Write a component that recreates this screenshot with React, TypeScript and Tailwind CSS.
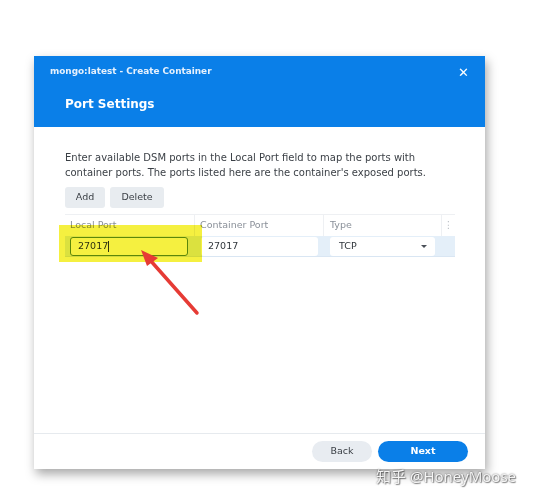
export default function App() {
  return (
    <div className="relative w-[536px] h-[499px] bg-white overflow-hidden pt-[56px] pl-[34px] font-['DejaVu_Sans',sans-serif]">
      <div className="w-[451px] h-[413px] bg-white flex flex-col shadow-[2px_5px_10px_rgba(0,0,0,0.35)]">
        {/* header */}
        <div className="h-[71px] bg-[#0a7fe8] text-white flex flex-col">
          <div className="flex items-center justify-between h-[30px] pl-[16px] pr-[16px] pt-[2px]">
            <span className="text-[8.9px] font-bold text-[#e6f1fd]">mongo:latest - Create Container</span>
            <span className="text-[13px] font-bold leading-none">✕</span>
          </div>
          <div className="pl-[31px] pt-[9px] text-[12px] font-bold">Port Settings</div>
        </div>

        {/* body */}
        <div className="flex-1 px-[31px] pt-[23px]">
          <p className="w-[368px] text-[10px] leading-[15px] text-[#3a3f45]">
            Enter available DSM ports in the Local Port field to map the ports with container ports. The ports listed here are the container's exposed ports.
          </p>
          <div className="flex gap-[5px] mt-[7px]">
            <button className="h-[21px] w-[40px] rounded-[3px] bg-[#e8ecf0] text-[9.5px] text-[#3a3f45]">Add</button>
            <button className="h-[21px] w-[54px] rounded-[3px] bg-[#e8ecf0] text-[9.5px] text-[#3a3f45]">Delete</button>
          </div>

          <div className="mt-[6px] w-[390px] border-t border-[#eef0f3]">
            <div className="flex h-[21px] items-center text-[9.5px] text-[#8a9099]">
              <div className="w-[130px] h-full flex items-center pl-[5px] border-r border-[#eef0f3]">Local Port</div>
              <div className="w-[129px] h-full flex items-center pl-[5px] border-r border-[#eef0f3]">Container Port</div>
              <div className="w-[118px] h-full flex items-center pl-[6px] border-r border-[#eef0f3]">Type</div>
              <div className="flex-1 flex items-center justify-center text-[#b5bac0]">⋮</div>
            </div>
            <div className="flex h-[21px] items-center bg-[#e4eff9] border-b border-[#d9e6f3]">
              <div className="w-[130px] pl-[5px]">
                <div className="h-[19px] w-[118px] rounded-[3px] border border-[#5f8f22] bg-white flex items-center pl-[7px] text-[9.5px] text-[#30363c]">
                  27017<span className="w-px h-[11px] bg-[#30363c]" />
                </div>
              </div>
              <div className="w-[129px] pl-[6px]">
                <div className="h-[19px] w-[117px] rounded-[3px] bg-white flex items-center pl-[7px] text-[9.5px] text-[#30363c]">27017</div>
              </div>
              <div className="w-[118px] pl-[6px]">
                <div className="h-[19px] w-[105px] rounded-[3px] bg-white flex items-center justify-between pl-[9px] pr-[8px] text-[9.5px] text-[#30363c]">
                  <span>TCP</span>
                  <span className="w-0 h-0 border-l-[3px] border-r-[3px] border-t-[3px] border-l-transparent border-r-transparent border-t-[#4a5058]" />
                </div>
              </div>
            </div>
          </div>
        </div>

        {/* footer */}
        <div className="h-[36px] border-t border-[#e6eaee] flex items-center justify-end gap-[6px] pr-[17px]">
          <button className="h-[21px] w-[60px] rounded-full bg-[#e8ecf1] text-[9.5px] text-[#3a3f45]">Back</button>
          <button className="h-[21px] w-[90px] rounded-full bg-[#0a7fe8] text-[9.5px] font-bold text-white">Next</button>
        </div>
      </div>

      {/* yellow highlight */}
      <div className="absolute left-[59px] top-[225px] w-[143px] h-[37px] bg-[#f5f040] mix-blend-multiply" />

      {/* red arrow */}
      <svg className="absolute left-0 top-0" width="536" height="499">
        <line x1="197" y1="313" x2="150" y2="260" stroke="#e63b35" strokeWidth="3.5" strokeLinecap="round" />
        <polygon points="141,250 158,258 147,266" fill="#e63b35" />
      </svg>

      {/* watermark */}
      <div className="absolute left-[376px] top-[465px] text-[15px] text-[#f4f4f4] font-['Noto_Sans','Noto_Sans_CJK_SC',sans-serif] [text-shadow:0_0_2px_rgba(0,0,0,0.6),1px_1px_1px_rgba(0,0,0,0.4)]">
        知乎 @HoneyMoose
      </div>
    </div>
  );
}
